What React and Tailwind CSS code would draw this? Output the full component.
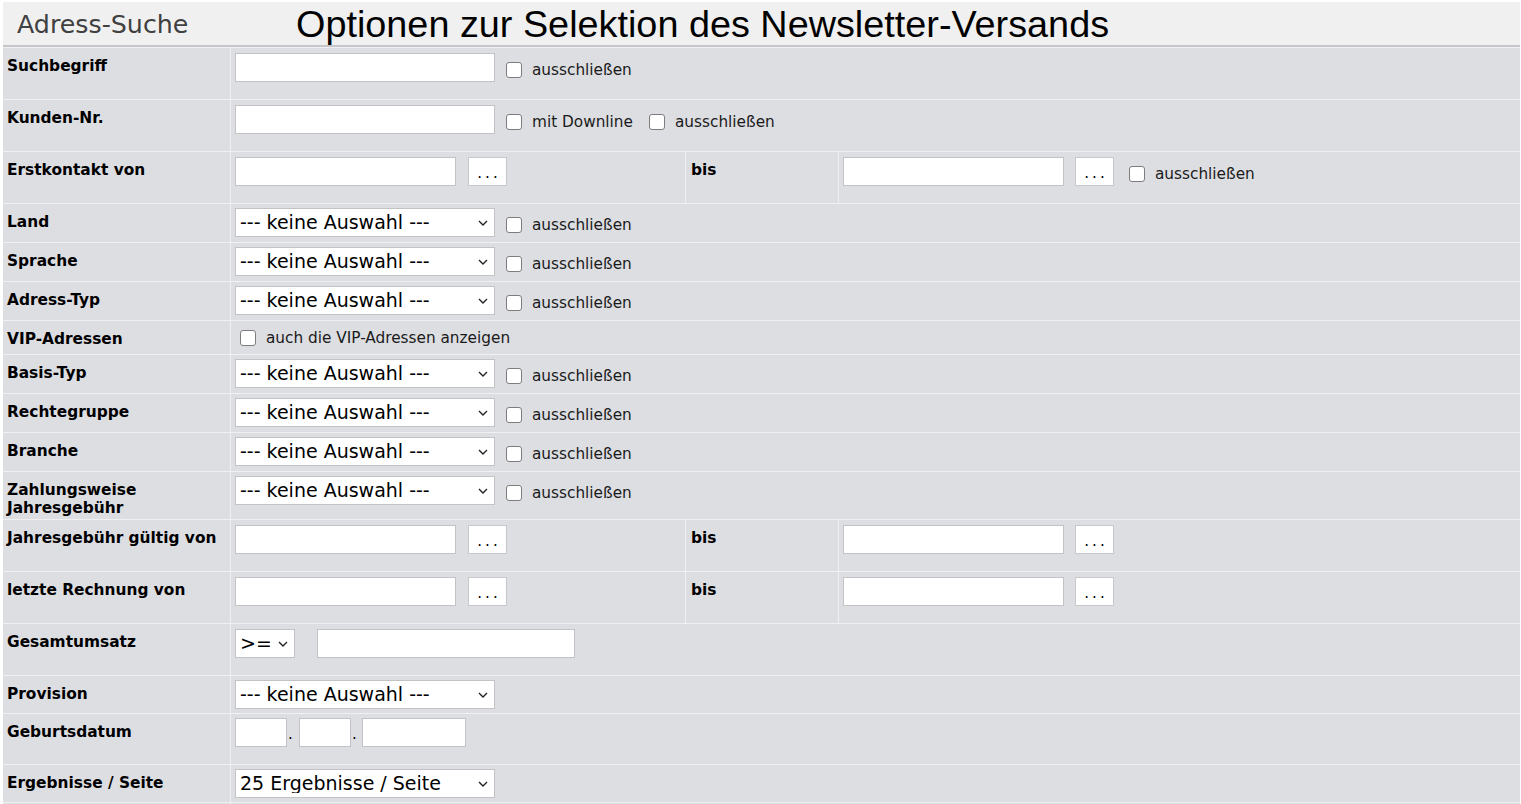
const font = { fontFamily: '"DejaVu Sans", Verdana, sans-serif' }

const Check = ({ className = '' }) => (
    <input
        type="checkbox"
        className={`appearance-none w-4 h-4 shrink-0 bg-white border-[1.5px] border-[#7d7d7d] rounded-[3px] ${className}`}
    />
)

const CheckLabel = ({ children, className = '' }) => (
    <span className={`text-[15.3px] text-[#1a1a1a] whitespace-nowrap ${className}`}>{children}</span>
)

const TextInput = ({ className = '' }) => (
    <input type="text" className={`h-[29px] bg-white border border-[#c3c3c7] ${className}`} />
)

const Select = ({ value = '--- keine Auswahl ---', className = 'w-[260px]' }) => (
    <div className={`relative h-[29px] ${className}`}>
        <select className="appearance-none w-full h-full bg-white border border-[#c3c3c7] pl-[4px] pr-6 text-[19px] text-black leading-none">
            <option>{value}</option>
        </select>
        <svg
            className="absolute right-[7px] top-[12px] pointer-events-none"
            width="10"
            height="6"
            viewBox="0 0 10 6"
            fill="none"
        >
            <path d="M1 1l4 4 4-4" stroke="#222" strokeWidth="1.4" />
        </svg>
    </div>
)

const DotsButton = ({ className = '' }) => (
    <button className={`w-[39px] h-[29px] bg-white border border-[#c8c8cc] text-[15px] leading-none pt-[4px] pl-[3px] tracking-[3px] text-black ${className}`}>
        ...
    </button>
)

const Label = ({ children, h }) => (
    <div className={`bg-[#dddee2] pl-[4px] pt-[9px] font-bold text-[15.4px] leading-[18px] text-black ${h}`}>
        {children}
    </div>
)

const Row = ({ label, h = 'h-[38px]', children }) => (
    <>
        <Label h={h}>{label}</Label>
        <div className={`col-span-3 bg-[#dddee2] pl-[4px] pt-[4px] flex items-start ${h}`}>{children}</div>
    </>
)

const Exclude = ({ ml = 'ml-[11px]' }) => (
    <div className="flex items-center mt-[5px]">
        <Check className={ml} />
        <CheckLabel className="ml-[10px] mt-[1px]">ausschließen</CheckLabel>
    </div>
)

const SelectRow = ({ label }) => (
    <Row label={label}>
        <div className="flex items-center">
            <Select />
            <Exclude />
        </div>
    </Row>
)

const DateRow = ({ label, exclude }) => (
    <>
        <Label h="h-[51px]">{label}</Label>
        <div className="bg-[#dddee2] pl-[4px] pt-[5px] flex items-start">
            <TextInput className="w-[221px]" />
            <DotsButton className="ml-[12px]" />
        </div>
        <div className="bg-[#dddee2] pl-[5px] pt-[9px] font-bold text-[15.4px] leading-[18px] text-black">bis</div>
        <div className="bg-[#dddee2] pl-[4px] pt-[5px] flex items-start">
            <div className="flex items-center">
                <TextInput className="w-[221px]" />
                <DotsButton className="ml-[11px]" />
                {exclude && <Exclude ml="ml-[15px]" />}
            </div>
        </div>
    </>
)

export default function App() {
    return (
        <div className="min-h-screen bg-white pt-[2px] pl-[3px]" style={font}>
            <div className="w-[1517px] h-[43px] bg-[#f0f0f0] flex items-center">
                <div className="w-[293px] pl-[14px] text-[25.3px] text-[#404040] pt-[3px]">Adress-Suche</div>
                <h1
                    className="text-[37.8px] text-black leading-none pt-[3px]"
                    style={{ fontFamily: '"Liberation Sans", Arial, sans-serif' }}
                >
                    Optionen zur Selektion des Newsletter-Versands
                </h1>
            </div>
            <div className="w-[1517px] h-[2px] bg-[#c6c6ca]" />
            <div className="w-[1517px] bg-[#f0f0f2] pt-px grid grid-cols-[227px_454px_152px_681px] gap-px">
                <Row label="Suchbegriff" h="h-[51px]">
                    <div className="flex items-center pt-[1px]">
                        <TextInput className="w-[260px]" />
                        <Exclude />
                    </div>
                </Row>
                <Row label="Kunden-Nr." h="h-[51px]">
                    <div className="flex items-center pt-[1px]">
                        <TextInput className="w-[260px]" />
                        <div className="flex items-center mt-[5px]">
                            <Check className="ml-[11px]" />
                            <CheckLabel className="ml-[10px] mt-[1px]">mit Downline</CheckLabel>
                            <Check className="ml-[16px]" />
                            <CheckLabel className="ml-[10px] mt-[1px]">ausschließen</CheckLabel>
                        </div>
                    </div>
                </Row>
                <DateRow label="Erstkontakt von" exclude />
                <SelectRow label="Land" />
                <SelectRow label="Sprache" />
                <SelectRow label="Adress-Typ" />
                <Row label="VIP-Adressen" h="h-[33px]">
                    <div className="flex items-center mt-[2px]">
                        <Check className="ml-[5px]" />
                        <CheckLabel className="ml-[10px]">auch die VIP-Adressen anzeigen</CheckLabel>
                    </div>
                </Row>
                <SelectRow label="Basis-Typ" />
                <SelectRow label="Rechtegruppe" />
                <SelectRow label="Branche" />
                <Row label={<>Zahlungsweise<br />Jahresgebühr</>} h="h-[47px]">
                    <div className="flex items-center">
                        <Select />
                        <Exclude />
                    </div>
                </Row>
                <DateRow label="Jahresgebühr gültig von" />
                <DateRow label="letzte Rechnung von" />
                <Row label="Gesamtumsatz" h="h-[51px]">
                    <div className="flex items-center pt-[1px]">
                        <Select value=">=" className="w-[60px]" />
                        <TextInput className="w-[258px] ml-[22px]" />
                    </div>
                </Row>
                <Row label="Provision" h="h-[37px]">
                    <Select />
                </Row>
                <Row label="Geburtsdatum" h="h-[50px]">
                    <div className="flex items-end">
                        <TextInput className="w-[52px]" />
                        <span className="w-[12px] pl-[1px] text-[15px] leading-none pb-[5px]">.</span>
                        <TextInput className="w-[52px]" />
                        <span className="w-[11px] pl-[1px] text-[15px] leading-none pb-[5px]">.</span>
                        <TextInput className="w-[104px]" />
                    </div>
                </Row>
                <Row label="Ergebnisse / Seite" h="h-[37px]">
                    <Select value="25 Ergebnisse / Seite" />
                </Row>
                <Row label="" h="h-[40px]" />
            </div>
        </div>
    )
}
